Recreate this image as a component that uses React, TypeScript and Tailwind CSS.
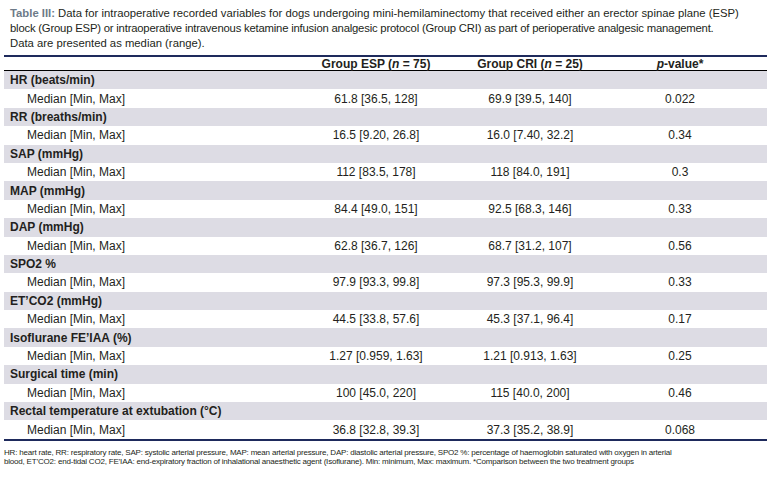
const rows: { label: string; esp: string; cri: string; p: string }[] = [
  { label: "HR (beats/min)", esp: "61.8 [36.5, 128]", cri: "69.9 [39.5, 140]", p: "0.022" },
  { label: "RR (breaths/min)", esp: "16.5 [9.20, 26.8]", cri: "16.0 [7.40, 32.2]", p: "0.34" },
  { label: "SAP (mmHg)", esp: "112 [83.5, 178]", cri: "118 [84.0, 191]", p: "0.3" },
  { label: "MAP (mmHg)", esp: "84.4 [49.0, 151]", cri: "92.5 [68.3, 146]", p: "0.33" },
  { label: "DAP (mmHg)", esp: "62.8 [36.7, 126]", cri: "68.7 [31.2, 107]", p: "0.56" },
  { label: "SPO2 %", esp: "97.9 [93.3, 99.8]", cri: "97.3 [95.3, 99.9]", p: "0.33" },
  { label: "ET\u2019CO2 (mmHg)", esp: "44.5 [33.8, 57.6]", cri: "45.3 [37.1, 96.4]", p: "0.17" },
  { label: "Isoflurane FE\u2019IAA (%)", esp: "1.27 [0.959, 1.63]", cri: "1.21 [0.913, 1.63]", p: "0.25" },
  { label: "Surgical time (min)", esp: "100 [45.0, 220]", cri: "115 [40.0, 200]", p: "0.46" },
  { label: "Rectal temperature at extubation (°C)", esp: "36.8 [32.8, 39.3]", cri: "37.3 [35.2, 38.9]", p: "0.068" },
];

const cols = "grid grid-cols-[296px_152px_156px_144px_1fr]";

export default function App() {
  return (
    <div
      className="w-[776px] h-[477px] bg-white text-[#231f20] pl-[4px] pr-[9px] pt-[6px]"
      style={{ fontFamily: '"Liberation Sans", Arial, sans-serif' }}
    >
      <p className="text-[11.3px] leading-[15px] pl-[6px] pb-[4px] whitespace-nowrap">
        <span className="font-bold text-[#6d7a88]">Table III:</span> Data for intraoperative recorded
        variables for dogs undergoing mini-hemilaminectomy that received either an erector spinae plane
        (ESP)
        <br />
        <span className="tracking-[-0.2px]">
          block (Group ESP) or intraoperative intravenous ketamine infusion analgesic protocol (Group CRI)
          as part of perioperative analgesic management.
        </span>
        <br />
        Data are presented as median (range).
      </p>

      <div className="border-t-2 border-[#1e2a5c]">
        <div className={`${cols} h-[14px] leading-[14px] text-[12px] font-bold border-b border-black`}>
          <div />
          <div className="text-center">
            Group ESP (<i>n</i> = 75)
          </div>
          <div className="text-center">
            Group CRI (<i>n</i> = 25)
          </div>
          <div className="text-center">
            <i>p</i>-value*
          </div>
          <div />
        </div>

        <div className="text-[12px] border-b-2 border-[#1e2a5c]">
          {rows.map((r) => (
            <div key={r.label}>
              <div className="h-[18.4px] flex items-center bg-[#dddce4] pl-[6px] font-bold">
                {r.label}
              </div>
              <div className={`${cols} h-[18.4px] items-center`}>
                <div className="pl-[23px]">Median [Min, Max]</div>
                <div className="text-center">{r.esp}</div>
                <div className="text-center">{r.cri}</div>
                <div className="text-center">{r.p}</div>
                <div />
              </div>
            </div>
          ))}
        </div>
      </div>

      <p className="text-[8px] leading-[9.5px] tracking-[-0.2px] pt-[7px] whitespace-nowrap">
        HR: heart rate, RR: respiratory rate, SAP: systolic arterial pressure, MAP: mean arterial pressure,
        DAP: diastolic arterial pressure, SPO2 %: percentage of haemoglobin saturated with oxygen in arterial
        <br />
        blood, ET’CO2: end-tidal CO2, FE’IAA: end-expiratory fraction of inhalational anaesthetic agent
        (Isoflurane). Min: minimum, Max: maximum. *Comparison between the two treatment groups
      </p>
    </div>
  );
}
